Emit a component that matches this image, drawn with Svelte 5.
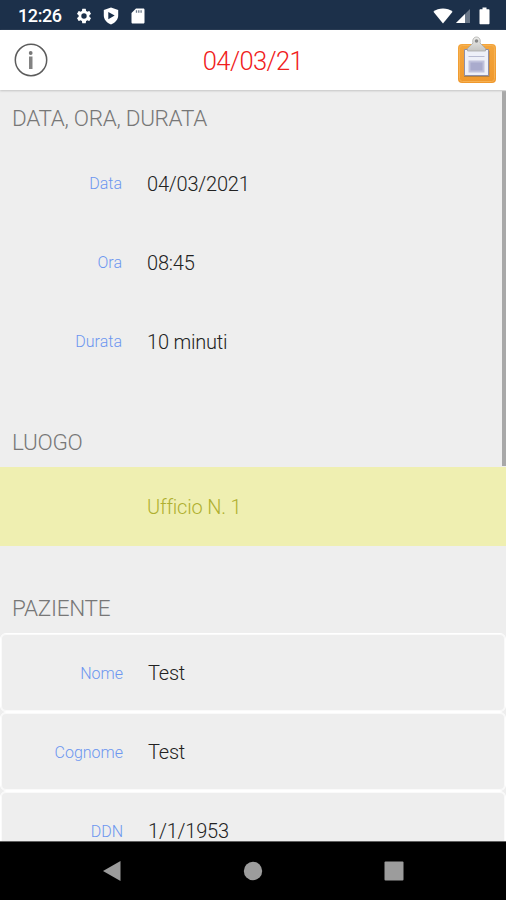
<script lang='ts'>
	type Row = { label: string; value: string };
	type Section = { title: string; kind: string; rows: Row[] };

	const sections: Section[] = [
		{
			title: 'DATA, ORA, DURATA',
			kind: 'plain',
			rows: [
				{ label: 'Data', value: '04/03/2021' },
				{ label: 'Ora', value: '08:45' },
				{ label: 'Durata', value: '10 minuti' }
			]
		},
		{
			title: 'LUOGO',
			kind: 'place',
			rows: [{ label: '', value: 'Ufficio N. 1' }]
		},
		{
			title: 'PAZIENTE',
			kind: 'card',
			rows: [
				{ label: 'Nome', value: 'Test' },
				{ label: 'Cognome', value: 'Test' },
				{ label: 'DDN', value: '1/1/1953' }
			]
		}
	];
</script>

<div class='screen'>
	<div class='status'>
		<span class='clock'>12:26</span>
		<svg class='gear' width='18' height='18' viewBox='0 0 24 24'>
			<path d='M19.14 12.94c.04-.3.06-.61.06-.94s-.02-.64-.07-.94l2.03-1.58a.49.49 0 0 0 .12-.61l-1.92-3.32a.49.49 0 0 0-.59-.22l-2.39.96a7 7 0 0 0-1.62-.94l-.36-2.54a.48.48 0 0 0-.48-.41h-3.84a.47.47 0 0 0-.47.41l-.36 2.54c-.59.24-1.13.57-1.62.94l-2.39-.96a.48.48 0 0 0-.59.22L2.74 8.87a.47.47 0 0 0 .12.61l2.03 1.58c-.05.3-.09.63-.09.94s.02.64.07.94l-2.03 1.58a.49.49 0 0 0-.12.61l1.92 3.32c.12.22.37.29.59.22l2.39-.96c.5.38 1.03.7 1.62.94l.36 2.54c.05.24.24.41.48.41h3.84c.24 0 .44-.17.47-.41l.36-2.54c.59-.24 1.13-.56 1.62-.94l2.39.96c.22.08.47 0 .59-.22l1.92-3.32a.47.47 0 0 0-.12-.61zM12 15.6a3.6 3.6 0 1 1 0-7.2 3.6 3.6 0 0 1 0 7.2z' />
		</svg>
		<svg class='shield' width='16' height='18' viewBox='0 0 16 18'>
			<path fill-rule='evenodd' d='M8 .6 15.200 3v5.500c0 4-3 7.300-7.200 8.900C3.800 15.800.8 12.500.8 8.500V3zM5.300 5v7.200L11.700 8.600z' />
		</svg>
		<svg class='card-icon' width='14' height='16' viewBox='0 0 14 16'>
			<path fill-rule='evenodd' d='M5 .5h7.200c.8 0 1.300.5 1.300 1.300v12.400c0 .8-.5 1.300-1.300 1.300H1.800c-.8 0-1.300-.5-1.300-1.300V5z' />
			<path d='M5.500 2.300v2.400M7.800 2.300v2.400M10.100 2.300v2.400' stroke='#1C304A' stroke-width='1.300' opacity='.65' />
		</svg>
		<svg class='wifi' width='20' height='16' viewBox='0 0 20 16'>
			<path d='M10 15.500.4 3.700C3 1.600 6.300.5 10 .5s7 1.100 9.600 3.200z' />
		</svg>
		<svg class='signal' width='16' height='16' viewBox='0 0 16 16'>
			<path d='M15 1v14H1z' opacity='.35' />
			<path d='M10 6v9H1z' />
		</svg>
		<svg class='battery' width='11' height='18' viewBox='0 0 11 18'>
			<path d='M3.500.5h4v1.700h2c.6 0 1 .4 1 1v13c0 .6-.4 1-1 1h-8c-.6 0-1-.4-1-1v-13c0-.6.4-1 1-1h2z' />
		</svg>
	</div>

	<header>
		<svg class='info' width='34' height='34' viewBox='0 0 34 34'>
			<circle cx='17' cy='17' r='15.700' fill='none' stroke='#5c5c5c' stroke-width='1.500' />
			<circle cx='16.700' cy='10' r='1.900' fill='#777' />
			<path d='M15 13.500h3.500V26H15z' fill='#828282' />
		</svg>
		<h1>04/03/21</h1>
		<svg class='clipboard' width='40' height='48' viewBox='0 0 40 48'>
			<defs>
				<linearGradient id='board' x1='0' y1='0' x2='0' y2='1'>
					<stop offset='0' stop-color='#f3a53c' />
					<stop offset='1' stop-color='#f0982c' />
				</linearGradient>
				<linearGradient id='clip' x1='0' y1='0' x2='0' y2='1'>
					<stop offset='0' stop-color='#eeeeec' />
					<stop offset='1' stop-color='#c4c4c2' />
				</linearGradient>
			</defs>
			<rect x='1' y='8' width='38' height='39' rx='4' fill='url(#board)' />
			<rect x='2.500' y='9.500' width='35' height='36' rx='3' fill='none' stroke='#f5b154' />
			<path d='M7 15h25.500v26H7z' fill='#b5803d' />
			<path d='M7.500 13.500h24v26h-24z' fill='#eef0f8' stroke='#8e8ea6' />
			<path d='M11.500 20.500h16' stroke='#b8bbd2' />
			<path d='M11.500 24.500h16v12h-16z' fill='#c0c2dc' />
			<path d='M13.500 26.500h12v8h-12z' fill='#a9abcd' />
			<path d='M10.500 12.500 16 7c-1-3.500 1-6 3.500-6s4.500 2.500 3.500 6l5.500 5.500V15h-18z' fill='url(#clip)' stroke='#a8a8a6' stroke-width='.8' />
			<circle cx='19.500' cy='5' r='1.800' fill='#888' />
		</svg>
	</header>

	<main>
		{#each sections as section}
			<section class={section.kind}>
				<h2>{section.title}</h2>
				{#each section.rows as row}
					<div class='row'>
						<span class='label'>{row.label}</span>
						<span class='value'>{row.value}</span>
					</div>
				{/each}
			</section>
		{/each}
		<div class='scrollbar'></div>
	</main>

	<nav>
		<svg width='20' height='22' viewBox='0 0 20 22'>
			<path d='M18.500 1v20L1 11z' />
		</svg>
		<svg width='20' height='20' viewBox='0 0 20 20'>
			<circle cx='10' cy='10' r='9.200' />
		</svg>
		<svg width='20' height='20' viewBox='0 0 20 20'>
			<rect x='.5' y='.5' width='19' height='19' rx='1' />
		</svg>
	</nav>
</div>

<style>
	:global(body) {
		margin: 0;
	}

	.screen {
		display: flex;
		flex-direction: column;
		width: 506px;
		height: 900px;
		overflow: hidden;
		background-color: #EEEEEE;
		font-family: Roboto, 'Liberation Sans', sans-serif;
		font-weight: 300;
	}

	svg {
		display: block;
		flex: none;
	}

	.status {
		display: flex;
		align-items: center;
		flex: none;
		box-sizing: border-box;
		height: 30px;
		padding: 1px 16px 0 18px;
		background-color: #1C304A;
		color: #FFFFFF;
		fill: #FFFFFF;
	}

	.clock {
		width: 57px;
		font-size: 18px;
		font-weight: 500;
		letter-spacing: -0.4px;
		line-height: 28px;
	}

	.shield {
		margin-left: 10px;
	}

	.card-icon {
		margin-left: 12px;
	}

	.wifi {
		margin-left: auto;
	}

	.signal {
		margin-left: 2px;
	}

	.battery {
		margin-left: 8px;
	}

	header {
		display: grid;
		grid-template-columns: 60px 1fr 60px;
		align-items: center;
		flex: none;
		height: 60px;
		background-color: #FFFFFF;
		box-shadow: 0 1px 2px #C4C4C4;
		z-index: 1;
	}

	.info {
		margin-left: 14px;
	}

	h1 {
		margin: 2px 0 0;
		text-align: center;
		font-size: 25.5px;
		font-weight: 300;
		letter-spacing: -0.6px;
		line-height: 30px;
		color: #F02020;
	}

	.clipboard {
		margin-left: 11px;
	}

	main {
		position: relative;
		flex: 1;
		min-height: 0;
		overflow: hidden;
	}

	h2 {
		box-sizing: border-box;
		height: 86px;
		margin: 0;
		padding: 47px 0 0 12px;
		font-size: 22.5px;
		font-weight: 300;
		letter-spacing: -0.3px;
		line-height: 28px;
		color: #777777;
	}

	.plain h2 {
		height: 54px;
		padding-top: 14px;
	}

	.card h2 {
		height: 87px;
		padding-top: 48px;
	}

	.row {
		display: grid;
		grid-template-columns: 122px 1fr;
		column-gap: 25px;
		align-items: center;
		box-sizing: border-box;
		height: 79px;
	}

	.label {
		text-align: right;
		font-size: 16px;
		color: #6C96F0;
	}

	.value {
		font-size: 20px;
		letter-spacing: -0.2px;
		color: #222222;
	}

	.place .row {
		background-color: #EFEFB1;
	}

	.place .value {
		color: #AFAF30;
	}

	.card .row {
		padding-top: 1px;
		border: 1px solid #FFFFFF;
		border-radius: 6px;
		box-shadow: inset 0 0 0 1px #FAFAFA;
	}

	.scrollbar {
		position: absolute;
		top: 1px;
		right: 0;
		width: 4px;
		height: 375px;
		background-color: #A8A8A8;
	}

	nav {
		display: flex;
		align-items: center;
		justify-content: center;
		gap: 121px;
		flex: none;
		box-sizing: border-box;
		height: 59px;
		border-top: 1px solid #606060;
		background-color: #000000;
		fill: #9C9C9C;
	}
</style>
